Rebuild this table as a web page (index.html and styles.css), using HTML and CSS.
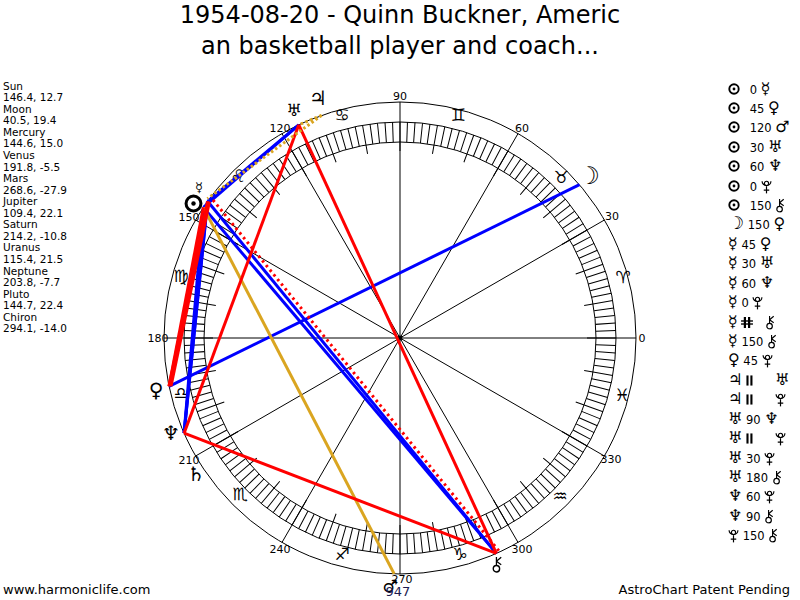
FILE: index.html
```html
<!DOCTYPE html>
<html>
<head>
<meta charset="utf-8">
<title>AstroChart</title>
<link rel="stylesheet" href="styles.css">
</head>
<body>
<div class="page">
  <h1 class="title">1954-08-20 - Quinn Buckner, Americ<br>an basketball player and coach...</h1>

  <aside class="left">
    <ul class="positions">
      <li>Sun</li><li>146.4, 12.7</li>
      <li>Moon</li><li>40.5, 19.4</li>
      <li>Mercury</li><li>144.6, 15.0</li>
      <li>Venus</li><li>191.8, -5.5</li>
      <li>Mars</li><li>268.6, -27.9</li>
      <li>Jupiter</li><li>109.4, 22.1</li>
      <li>Saturn</li><li>214.2, -10.8</li>
      <li>Uranus</li><li>115.4, 21.5</li>
      <li>Neptune</li><li>203.8, -7.7</li>
      <li>Pluto</li><li>144.7, 22.4</li>
      <li>Chiron</li><li>294.1, -14.0</li>
    </ul>
    <div class="site">www.harmoniclife.com</div>
  </aside>

  <main class="chart">
    <svg class="wheel" width="500" height="530" viewBox="150 70 500 530" xmlns="http://www.w3.org/2000/svg">
      <defs>
        <symbol id="sun" viewBox="0 0 12 12">
          <circle cx="6" cy="6" r="4.7" fill="none" stroke="#000" stroke-width="1.9"/>
          <circle cx="6" cy="6" r="1.4" fill="#000"/>
        </symbol>
        <symbol id="pluto" viewBox="0 0 12 16">
          <path d="M1.2 2.2 A4.8 4.8 0 0 0 10.8 2.2" fill="none" stroke="#000" stroke-width="1.3"/>
          <circle cx="6" cy="4.6" r="2.3" fill="none" stroke="#000" stroke-width="1.3"/>
          <path d="M6 7.8 V15.5 M3 12 H9" fill="none" stroke="#000" stroke-width="1.3"/>
        </symbol>
        <symbol id="chiron" viewBox="0 0 12 16">
          <circle cx="5" cy="12" r="3" fill="none" stroke="#000" stroke-width="1.3"/>
          <path d="M5 9 V1 M5 5 L9.5 1.2 M5 5 L9.5 8.2" fill="none" stroke="#000" stroke-width="1.2"/>
        </symbol>
        <symbol id="par" viewBox="0 0 8 12">
          <rect x="0.5" y="0" width="2.4" height="12" fill="#000"/>
          <rect x="5" y="0" width="2.4" height="12" fill="#000"/>
        </symbol>
        <symbol id="contra" viewBox="0 0 13 12">
          <rect x="3" y="0" width="2.4" height="12" fill="#000"/>
          <rect x="7.6" y="0" width="2.4" height="12" fill="#000"/>
          <rect x="0" y="3.6" width="13" height="1.5" fill="#000"/>
          <rect x="0" y="6.9" width="13" height="1.5" fill="#000"/>
        </symbol>
      </defs>

      <!-- rings -->
      <circle class="ring" cx="400" cy="338" r="236"/>
      <circle class="ring" cx="400" cy="338" r="216"/>
      <circle class="ring" cx="400" cy="338" r="196"/>
      <circle class="ticks" cx="400" cy="338" r="206" pathLength="360"/>
      <circle class="longticks" cx="400" cy="338" r="191.5" pathLength="360"/>

      <!-- axes -->
      <g class="axis">
        <line x1="636" y1="338" x2="164" y2="338"/>
        <line x1="604.4" y1="220" x2="195.6" y2="456"/>
        <line x1="518" y1="133.6" x2="282" y2="542.4"/>
        <line x1="400" y1="102" x2="400" y2="574"/>
        <line x1="282" y1="133.6" x2="518" y2="542.4"/>
        <line x1="195.6" y1="220" x2="604.4" y2="456"/>
      </g>
      <circle cx="400" cy="338" r="2.4" fill="#000"/>

      <!-- degree labels -->
      <g class="deg">
        <text x="642" y="338">0</text>
        <text x="612" y="216">30</text>
        <text x="522" y="128">60</text>
        <text x="400" y="96">90</text>
        <text x="280" y="128">120</text>
        <text x="189" y="217">150</text>
        <text x="158" y="338">180</text>
        <text x="189" y="460">210</text>
        <text x="280" y="549">240</text>
        <text x="402" y="579">270</text>
        <text x="522" y="549">300</text>
        <text x="611" y="459">330</text>
      </g>

      <!-- zodiac signs -->
      <g class="sign">
        <text x="623" y="277">♈</text>
        <text x="561" y="177">♉</text>
        <text x="458" y="115">♊</text>
        <text x="342" y="115">♋</text>
        <text x="238" y="176">♌</text>
        <text x="181" y="276">♍</text>
        <text x="181" y="393">♎</text>
        <text x="240" y="494">♏</text>
        <text x="342" y="554">♐</text>
        <text x="460" y="554">♑</text>
        <text x="560" y="496">♒</text>
        <text x="622" y="395">♓</text>
      </g>

      <!-- aspect lines -->
      <g class="asp blue">
        <line x1="203.4" y1="207.4" x2="298.8" y2="124.8"/>
        <line x1="207.6" y1="201.3" x2="298.8" y2="124.8"/>
        <line x1="203.4" y1="207.4" x2="184.1" y2="433.2"/>
        <line x1="207.6" y1="201.3" x2="184.1" y2="433.2"/>
        <line x1="207.4" y1="201.6" x2="184.1" y2="433.2"/>
        <line x1="203.4" y1="207.4" x2="496.4" y2="553.4"/>
        <line x1="207.6" y1="201.3" x2="496.4" y2="553.4"/>
        <line x1="579.5" y1="184.7" x2="169" y2="386.3"/>
      </g>
      <line class="asp gold" x1="203.4" y1="207.4" x2="394.2" y2="573.9"/>
      <g class="asp red">
        <line x1="203.4" y1="207.4" x2="169" y2="386.3"/>
        <line x1="207.6" y1="201.3" x2="169" y2="386.3"/>
        <line x1="209.4" y1="201.6" x2="171" y2="386.3"/>
        <line x1="298.8" y1="124.8" x2="184.1" y2="433.2"/>
        <line x1="298.8" y1="124.8" x2="496.4" y2="553.4"/>
        <line x1="184.1" y1="433.2" x2="496.4" y2="553.4"/>
      </g>
      <g class="asp golddot">
        <line x1="321.6" y1="115.4" x2="298.8" y2="124.8"/>
        <line x1="321.6" y1="115.4" x2="207.4" y2="198.6"/>
      </g>
      <line class="asp reddot" x1="213" y1="200" x2="499" y2="551"/>

      <!-- planets -->
      <use href="#sun" x="184" y="194" width="19" height="19"/>
      <g class="pl">
        <text class="small" x="199" y="187">☿</text>
        <text class="moon" x="589" y="176">☽</text>
        <text x="156" y="390">♀</text>
        <text class="mid" x="390" y="586">♂</text>
        <text x="318" y="98">♃</text>
        <text x="196" y="474">♄</text>
        <text class="mid" x="294" y="110">♅</text>
        <text x="171" y="433">♆</text>
      </g>
      <use href="#chiron" x="491" y="556" width="13" height="17"/>
      <text class="odd" x="398" y="591">947</text>
    </svg>
  </main>

  <aside class="right">
    <ul class="aspects">
      <li><svg class="sunic" viewBox="0 0 12 12"><use href="#sun"/></svg> 0 <span class="g">☿</span></li>
      <li><svg class="sunic" viewBox="0 0 12 12"><use href="#sun"/></svg> 45 <span class="g">♀</span></li>
      <li><svg class="sunic" viewBox="0 0 12 12"><use href="#sun"/></svg> 120 <span class="g">♂</span></li>
      <li><svg class="sunic" viewBox="0 0 12 12"><use href="#sun"/></svg> 30 <span class="g">♅</span></li>
      <li><svg class="sunic" viewBox="0 0 12 12"><use href="#sun"/></svg> 60 <span class="g">♆</span></li>
      <li><svg class="sunic" viewBox="0 0 12 12"><use href="#sun"/></svg> 0 <svg class="ic" viewBox="0 0 12 16"><use href="#pluto"/></svg></li>
      <li><svg class="sunic" viewBox="0 0 12 12"><use href="#sun"/></svg> 150 <svg class="ic" viewBox="0 0 12 16"><use href="#chiron"/></svg></li>
      <li><span class="g moon">☽</span> 150 <span class="g">♀</span></li>
      <li><span class="g">☿</span> 45 <span class="g">♀</span></li>
      <li><span class="g">☿</span> 30 <span class="g">♅</span></li>
      <li><span class="g">☿</span> 60 <span class="g">♆</span></li>
      <li><span class="g">☿</span> 0 <svg class="ic" viewBox="0 0 12 16"><use href="#pluto"/></svg></li>
      <li><span class="g">☿</span> <svg class="sym contra" viewBox="0 0 13 12"><use href="#contra"/></svg><svg class="ic" viewBox="0 0 12 16"><use href="#chiron"/></svg></li>
      <li><span class="g">☿</span> 150 <svg class="ic" viewBox="0 0 12 16"><use href="#chiron"/></svg></li>
      <li><span class="g">♀</span> 45 <svg class="ic" viewBox="0 0 12 16"><use href="#pluto"/></svg></li>
      <li><span class="g">♃</span> <svg class="sym par" viewBox="0 0 8 12"><use href="#par"/></svg><span class="g">♅</span></li>
      <li><span class="g">♃</span> <svg class="sym par" viewBox="0 0 8 12"><use href="#par"/></svg><svg class="ic" viewBox="0 0 12 16"><use href="#pluto"/></svg></li>
      <li><span class="g">♅</span> 90 <span class="g">♆</span></li>
      <li><span class="g">♅</span> <svg class="sym par" viewBox="0 0 8 12"><use href="#par"/></svg><svg class="ic" viewBox="0 0 12 16"><use href="#pluto"/></svg></li>
      <li><span class="g">♅</span> 30 <svg class="ic" viewBox="0 0 12 16"><use href="#pluto"/></svg></li>
      <li><span class="g">♅</span> 180 <svg class="ic" viewBox="0 0 12 16"><use href="#chiron"/></svg></li>
      <li><span class="g">♆</span> 60 <svg class="ic" viewBox="0 0 12 16"><use href="#pluto"/></svg></li>
      <li><span class="g">♆</span> 90 <svg class="ic" viewBox="0 0 12 16"><use href="#chiron"/></svg></li>
      <li><svg class="ic" viewBox="0 0 12 16"><use href="#pluto"/></svg> 150 <svg class="ic" viewBox="0 0 12 16"><use href="#chiron"/></svg></li>
    </ul>
    <div class="patent">AstroChart Patent Pending</div>
  </aside>
</div>
</body>
</html>
```

FILE: styles.css
```css
* { box-sizing: border-box; margin: 0; padding: 0; }
html, body { width: 800px; height: 600px; overflow: hidden; background: #fff; }
body { font-family: "DejaVu Sans", "Liberation Sans", sans-serif; color: #000; }

.page {
  display: grid;
  grid-template-columns: 150px 500px 150px;
  grid-template-rows: 70px 530px;
  width: 800px;
  height: 600px;
}

.title {
  grid-column: 1 / -1;
  font-weight: normal;
  font-size: 24px;
  line-height: 31px;
  text-align: center;
}

.left {
  display: flex;
  flex-direction: column;
  justify-content: space-between;
  padding: 10.6px 0 3px 3px;
}
.positions { list-style: none; font-size: 10.5px; line-height: 11.57px; }

.site, .patent { font-size: 13px; line-height: 14px; white-space: nowrap; }

.right {
  display: flex;
  flex-direction: column;
  justify-content: space-between;
  padding: 10.5px 10px 3px 0;
}
.patent { align-self: flex-end; }

.aspects { list-style: none; font-size: 11.5px; padding-left: 78px; }
.aspects li { height: 19.43px; line-height: 19.43px; white-space: nowrap; }
.aspects .g { font-size: 16px; line-height: 10px; }
.aspects .g.moon { font-size: 18px; font-weight: bold; }
.sunic { width: 12px; height: 12px; vertical-align: -1px; margin-right: 6px; }
.ic { width: 11px; height: 15px; vertical-align: -3px; }
.sym { height: 11px; vertical-align: -1px; }
.sym.par { width: 7px; margin-right: 22px; }
.sym.contra { width: 12px; margin-right: 12px; }

.chart { position: relative; }
.wheel { display: block; overflow: visible; }

.ring { fill: none; stroke: #000; stroke-width: 1; }
.ticks { fill: none; stroke: #000; stroke-width: 20; stroke-dasharray: 0.28 1.72; stroke-dashoffset: 0.14; }
.longticks { fill: none; stroke: #000; stroke-width: 9; stroke-dasharray: 0.3 9.7; stroke-dashoffset: 0.15; }
.axis line { stroke: #000; stroke-width: 1; }

.deg text { font-size: 11px; text-anchor: middle; dominant-baseline: central; fill: #000; }
.sign text { font-size: 17px; text-anchor: middle; dominant-baseline: central; fill: #000; }

.asp line, line.asp { stroke-width: 3; fill: none; }
.blue line { stroke: #0000ff; }
.red line { stroke: #ff0000; }
line.gold { stroke: #daa520; }
.golddot line { stroke: #daa520; stroke-dasharray: 2.5 2.5; }
line.reddot { stroke: #ff0000; stroke-dasharray: 2.5 3.5; }

.pl text { font-size: 20px; text-anchor: middle; dominant-baseline: central; fill: #000; }
.pl text.small { font-size: 13px; }
.pl text.mid { font-size: 17px; }
.pl text.moon { font-size: 24px; font-weight: bold; }
.odd { font-size: 13px; text-anchor: middle; dominant-baseline: central; fill: #1a1a50; }
```
